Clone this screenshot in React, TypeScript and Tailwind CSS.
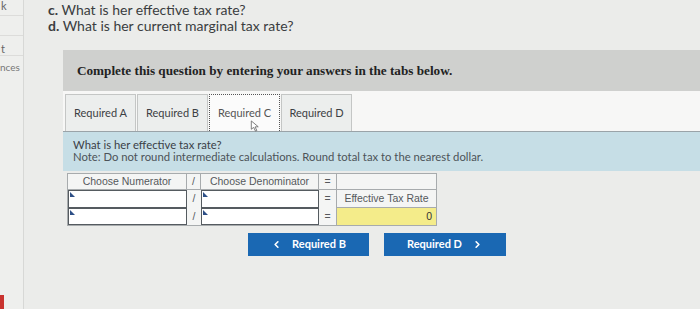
import React from "react";
import { ChevronLeft, ChevronRight } from "lucide-react";

const Corner = () => (
  <span className="absolute left-[1px] top-[1px] h-0 w-0 border-l-[5px] border-t-[5px] border-l-[#2d4f86] border-t-transparent" />
);

function InputCell({ w }: { w: string }) {
  return (
    <div className={`relative h-full ${w} border-[1.5px] border-[#555b60] bg-white`}>
      <Corner />
    </div>
  );
}

export default function App() {
  const tabs = ["Required A", "Required B", "Required C", "Required D"];
  return (
    <div className="relative flex h-[309px] w-[700px] overflow-hidden bg-[#ebecea] font-['Lato',sans-serif] text-[#2f3235]">
      {/* left nav strip */}
      <div className="flex w-[24px] shrink-0 flex-col border-r border-[#d7d8d6] bg-[#eeefed] text-[11px] text-[#666]">
        <div className="h-[16px] border-b border-[#dcdcda] pl-[1px] leading-[12px]">k</div>
        <div className="h-[20px] border-b border-[#dcdcda]" />
        <div className="h-[20px] border-b border-[#dcdcda] pl-[1px] leading-[26px]">t</div>
        <div className="h-[24px] pt-[4px] text-[10px] text-[#777]">nces</div>
        <div className="flex-1" />
        <div className="h-[14px] w-[4px] bg-[#c9332f]" />
      </div>

      <div className="flex flex-1 flex-col">
        <div className="ml-[24px] pt-[2px] text-[14px] leading-[16px] text-[#3a3d40]">
          <p><b>c.</b> What is her effective tax rate?</p>
          <p><b>d.</b> What is her current marginal tax rate?</p>
        </div>

        <div className="ml-[39px] mt-[16px] flex h-[41px] items-center bg-[#cfd0ce] pl-[14px] font-['Liberation_Serif',serif] text-[13.2px] font-bold text-[#222]">
          Complete this question by entering your answers in the tabs below.
        </div>

        <div className="ml-[39px] flex h-[41px] items-end border-b border-[#9aa3a8] bg-[#f7f7f6] pl-[2px]">
          {tabs.map((t) => {
            const active = t === "Required C";
            return (
              <div
                key={t}
                className={`relative mr-[1px] flex h-[37px] w-[71px] items-center justify-center text-[11px] ${
                  active
                    ? "border-[1.5px] border-b-0 border-dotted border-[#555] bg-[#fbfbfb] text-[#555]"
                    : "border border-b-0 border-[#c4c6c5] bg-[#eceeed] text-[#3c4044]"
                }`}
              >
                {t}
                {active && (
                  <svg className="absolute left-[40px] top-[25px]" width="10" height="12" viewBox="0 0 10 13">
                    <path d="M1 1 L1 10 L3.5 8 L5.5 12 L7 11.3 L5 7.5 L8.5 7.3 Z" fill="#fff" stroke="#666" strokeWidth="0.9" />
                  </svg>
                )}
              </div>
            );
          })}
        </div>

        <div className="ml-[39px] h-[39px] bg-[#c6dee6] pl-[10px] pt-[7px] text-[11.3px] leading-[12px] text-[#3a4046]">
          <p>What is her effective tax rate?</p>
          <p className="text-[#4c5358]">Note: Do not round intermediate calculations. Round total tax to the nearest dollar.</p>
        </div>

        <div className="ml-[43px] mt-[2px] flex w-[370px] flex-col font-['Liberation_Sans',sans-serif] text-[10.5px] text-[#55595c]">
          <div className="flex h-[17px] border border-[#a7abad] bg-[#f4f5f4]">
            <div className="flex w-[119px] items-center justify-center border-r border-[#a7abad]">Choose Numerator</div>
            <div className="flex w-[14px] items-center justify-center border-r border-[#a7abad]">/</div>
            <div className="flex w-[118px] items-center justify-center border-r border-[#a7abad]">Choose Denominator</div>
            <div className="flex w-[18px] items-center justify-center border-r border-[#a7abad]">=</div>
            <div className="flex-1" />
          </div>
          <div className="flex h-[18px] border-x border-[#a7abad] bg-[#f4f5f4]">
            <InputCell w="w-[119px]" />
            <div className="flex w-[14px] items-center justify-center">/</div>
            <InputCell w="w-[118px]" />
            <div className="flex w-[18px] items-center justify-center border-r border-[#a7abad]">=</div>
            <div className="flex flex-1 items-center justify-center border-b border-[#a7abad]">Effective Tax Rate</div>
          </div>
          <div className="flex h-[18px] border-x border-b border-[#a7abad] bg-[#f4f5f4]">
            <InputCell w="w-[119px]" />
            <div className="flex w-[14px] items-center justify-center">/</div>
            <InputCell w="w-[118px]" />
            <div className="flex w-[18px] items-center justify-center border-r border-[#a7abad]">=</div>
            <div className="flex flex-1 items-center justify-end bg-[#f4ec8a] pr-[4px] text-[#333]">0</div>
          </div>
        </div>

        <div className="ml-[224px] mt-[7px] flex gap-[15px] text-[11px] font-bold text-white">
          <button className="flex h-[23px] w-[121px] items-center justify-center gap-[10px] bg-[#1a68b3]">
            <ChevronLeft size={11} strokeWidth={3.5} />
            <span>Required B</span>
          </button>
          <button className="flex h-[23px] w-[122px] items-center justify-center gap-[10px] bg-[#1a68b3]">
            <span>Required D</span>
            <ChevronRight size={11} strokeWidth={3.5} />
          </button>
        </div>
      </div>
    </div>
  );
}
